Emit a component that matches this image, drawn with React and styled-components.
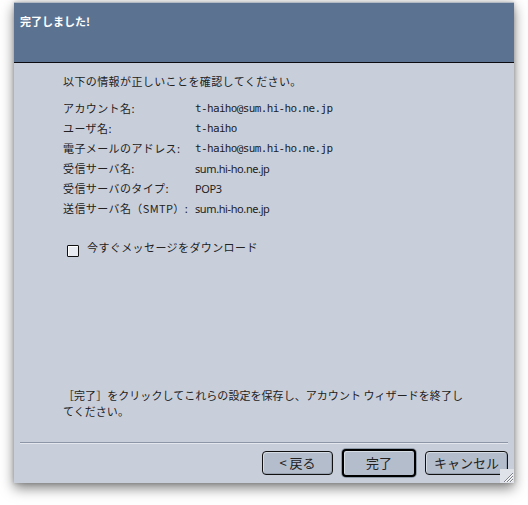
import React from 'react'
import styled, { createGlobalStyle } from 'styled-components'

const Global = createGlobalStyle`
    html, body {
        margin: 0;
        background: #fff;
    }
    body {
        font-family: "Noto Sans CJK JP", "DejaVu Sans", sans-serif;
        color: #222;
    }
`

const Page = styled.div`
    width: 528px;
    height: 505px;
    padding: 2px 0 0 14px;
    box-sizing: border-box;
`

const Window = styled.div`
    position: relative;
    width: 500px;
    height: 480px;
    display: flex;
    flex-direction: column;
    background: #c9cfda;
    border-top: 1px solid #b4bac4;
    box-shadow: 0 5px 12px rgba(0, 0, 0, 0.5), 0 0 4px rgba(0, 0, 0, 0.2);
`

const Header = styled.div`
    height: 60px;
    background: #5b7391;
    border-bottom: 1px solid #0c0c10;
    padding: 11px 6px 0;
    box-sizing: border-box;
    color: #fff;
    font-size: 11px;
    font-weight: bold;
    line-height: 14px;
`

const Body = styled.div`
    flex: 1;
    display: flex;
    flex-direction: column;
    padding: 10px 0 0 49px;
    font-size: 11px;
    letter-spacing: 0.4px;
`

const Intro = styled.div`
    line-height: 16px;
`

const Details = styled.div`
    display: grid;
    grid-template-columns: 132px 1fr;
    grid-auto-rows: 20px;
    align-items: center;
    margin-top: 9px;
`

const Value = styled.div`
    font-family: ${({ mono }) => mono ? '"DejaVu Sans Mono", monospace' : '"Noto Sans", sans-serif'};
    letter-spacing: ${({ mono }) => mono ? '-0.65px' : '-0.4px'};
`

const CheckRow = styled.label`
    display: flex;
    align-items: flex-start;
    gap: 8px;
    margin: 22px 0 0 4px;
    line-height: 14px;
`

const Box = styled.span`
    width: 10px;
    height: 10px;
    margin-top: 5px;
    border: 1px solid #111;
    border-radius: 1px;
    background: #e8ecf2;
    box-shadow: inset 1px 1px 0 #fff;
`

const Note = styled.div`
    margin-top: auto;
    margin-bottom: 23px;
    line-height: 16px;
    letter-spacing: 0.05px;
`

const Footer = styled.div`
    margin: 0 6px 0 6px;
    border-top: 1px solid #8c96a6;
    box-shadow: inset 0 1px 0 #e4e8ee;
    height: 41px;
    display: flex;
    justify-content: flex-end;
    align-items: center;
    gap: 9px;
    box-sizing: border-box;
`

const Button = styled.button`
    width: ${({ w }) => w}px;
    height: ${({ primary }) => primary ? 28 : 24}px;
    margin: 0;
    padding: 0;
    font-family: "Noto Sans CJK JP", sans-serif;
    font-size: 13px;
    color: #222;
    background: #b4bdcb;
    border: ${({ primary }) => primary ? '2px solid #000' : '1px solid #111'};
    border-radius: 4px;
    box-shadow: ${({ primary }) => primary
        ? '0 0 0 1px #8f9aa8, inset 1px 1px 0 #d6dce4'
        : 'inset 1px 1px 0 #d6dce4, inset -1px -1px 0 #98a2b0'};
    line-height: 20px;
`

const Grip = styled.svg`
    position: absolute;
    right: 0;
    bottom: 0;
`

const rows = [
    ['アカウント名:', 't-haiho@sum.hi-ho.ne.jp', true],
    ['ユーザ名:', 't-haiho', true],
    ['電子メールのアドレス:', 't-haiho@sum.hi-ho.ne.jp', true],
    ['受信サーバ名:', 'sum.hi-ho.ne.jp', false],
    ['受信サーバのタイプ:', 'POP3', false],
    ['送信サーバ名（SMTP）:', 'sum.hi-ho.ne.jp', false],
]

const App = () => {
    return (
        <Page>
            <Global />
            <Window>
                <Header>完了しました!</Header>
                <Body>
                    <Intro>以下の情報が正しいことを確認してください。</Intro>
                    <Details>
                        {rows.map(([label, value, mono]) => (
                            <React.Fragment key={label}>
                                <div>{label}</div>
                                <Value mono={mono}>{value}</Value>
                            </React.Fragment>
                        ))}
                    </Details>
                    <CheckRow>
                        <Box />
                        <span>今すぐメッセージをダウンロード</span>
                    </CheckRow>
                    <Note>
                        ［完了］をクリックしてこれらの設定を保存し、アカウント ウィザードを終了し<br />
                        てください。
                    </Note>
                </Body>
                <Footer>
                    <Button w={71}>&lt; 戻る</Button>
                    <Button w={74} primary>完了</Button>
                    <Button w={83}>キャンセル</Button>
                </Footer>
                <Grip width="14" height="14" viewBox="0 0 14 14">
                    <rect width="14" height="14" fill="#dfe2e8" />
                    <path d="M4 13 L13 4 M7 13 L13 7 M10 13 L13 10" stroke="#7b808a" strokeWidth="1" />
                    <path d="M5 13 L13 5 M8 13 L13 8 M11 13 L13 11" stroke="#fff" strokeWidth="1" />
                </Grip>
            </Window>
        </Page>
    )
}

export default App
